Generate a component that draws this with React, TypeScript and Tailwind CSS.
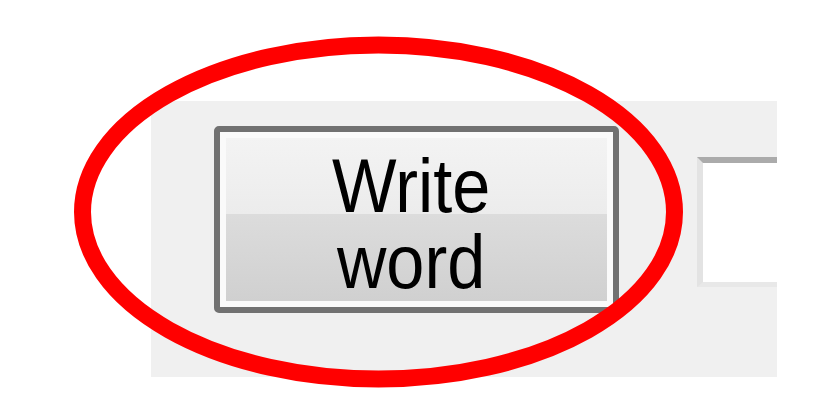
import React from 'react';

// Enlarged classic-style push button next to a text field, circled in red
export default function App() {
  return (
    <div className="relative w-[835px] h-[410px] bg-white overflow-hidden pt-[101px] pl-[151px]">
      {/* Dialog surface */}
      <div className="w-[626px] h-[276px] bg-[#f0f0f0] overflow-hidden flex items-start gap-[78px] pl-[63px] pt-[25px]">
        {/* Button */}
        <div className="shrink-0 w-[405px] h-[187px] border-[6px] border-[#717171] rounded-[5px]">
          <div className="h-full border-[6px] border-[#fafafa] bg-[linear-gradient(to_bottom,#f3f3f3_0px,#ececec_76px,#dcdcdc_76px,#d0d0d0_100%)]">
            <div
              className="h-full flex flex-col items-center justify-center pr-[12px] pt-[9px] text-black text-[76px] leading-[76px] scale-x-[0.9]"
              style={{ fontFamily: '"Liberation Sans", Arial, sans-serif' }}
            >
              <span>Write</span>
              <span>word</span>
            </div>
          </div>
        </div>

        {/* Text field, cut off at the edge */}
        <div className="shrink-0 mt-[31px] w-[220px] h-[130px] bg-white border-t-[6px] border-t-[#ababab] border-l-[6px] border-l-[#e3e3e3] border-b-[5px] border-b-[#e8e8e8]" />
      </div>

      {/* Red annotation ring */}
      <svg
        className="absolute left-0 top-0 pointer-events-none"
        width="835"
        height="410"
        viewBox="0 0 835 410"
      >
        <ellipse cx="378.5" cy="212" rx="296" ry="167" fill="none" stroke="#ff0000" strokeWidth="17" />
      </svg>
    </div>
  );
}
